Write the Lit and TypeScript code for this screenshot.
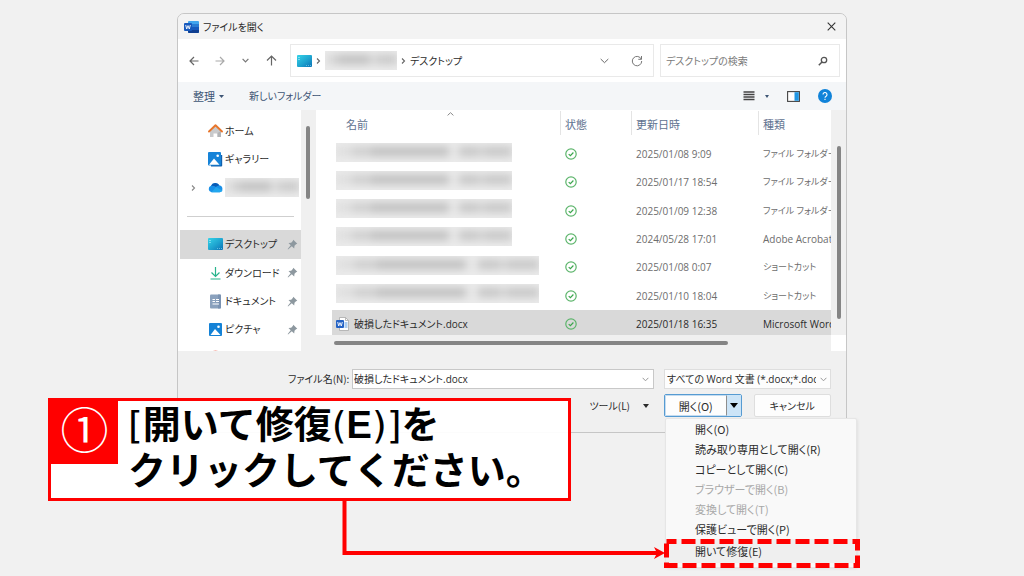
import { LitElement, html, css, svg, nothing } from "lit";
import { customElement } from "lit/decorators.js";
import { classMap } from "lit/directives/class-map.js";

interface FileRow {
  name?: string;
  wide?: boolean;
  date: string;
  kind: string;
  kana?: boolean;
  selected?: boolean;
}

const FILES: FileRow[] = [
  { date: "2025/01/08 9:09", kind: "ファイル フォルダー", kana: true },
  { date: "2025/01/17 18:54", kind: "ファイル フォルダー", kana: true },
  { date: "2025/01/09 12:38", kind: "ファイル フォルダー", kana: true },
  { date: "2024/05/28 17:01", kind: "Adobe Acrobat" },
  { date: "2025/01/08 0:07", kind: "ショートカット", kana: true, wide: true },
  { date: "2025/01/10 18:04", kind: "ショートカット", kana: true, wide: true },
  { name: "破損したドキュメント.docx", date: "2025/01/18 16:35", kind: "Microsoft Word", selected: true },
];

const MENU = [
  { label: "開く(O)" },
  { label: "読み取り専用として開く(R)" },
  { label: "コピーとして開く(C)" },
  { label: "ブラウザーで開く(B)", disabled: true },
  { label: "変換して開く(T)", disabled: true },
  { label: "保護ビューで開く(P)" },
  { label: "開いて修復(E)", marked: true },
];

const icon = (w: number, h: number, body: unknown) =>
  html`<svg width=${w} height=${h} viewBox="0 0 ${w} ${h}" fill="none" aria-hidden="true">${body}</svg>`;

const wordApp = icon(15, 14, svg`
  <rect x="4" y="1" width="11" height="12" rx="1" fill="#41a5ee"/>
  <path d="M4 4h11v3H4z" fill="#2b7cd3"/><path d="M4 7h11v3H4z" fill="#185abd"/>
  <path d="M4 10h11v2a1 1 0 0 1-1 1H5a1 1 0 0 1-1-1z" fill="#103f91"/>
  <rect x="0" y="3" width="8" height="8" rx="1" fill="#185abd"/>
  <path d="M1.700 5l1 4L4 5.600 5.300 9l1-4" stroke="#fff" stroke-width=".9"/>`);
const wordDoc = icon(13, 14, svg`
  <path d="M3.500 .5h6l3 3v10h-9z" fill="#fff" stroke="#a9a9a9" stroke-width=".8"/>
  <path d="M9.500 .5v3h3" stroke="#a9a9a9" stroke-width=".8"/>
  <path d="M8.500 6h3M8.500 8h3M8.500 10h3" stroke="#5b9be0" stroke-width="1"/>
  <rect x="0" y="3" width="8" height="8" rx="1" fill="#2462c4"/>
  <path d="M1.700 5l1 4L4 5.600 5.300 9l1-4" stroke="#fff" stroke-width=".9"/>`);
const desktop = icon(15, 12, svg`
  <defs><linearGradient id="dk" x1="0" y1="0" x2="1" y2="1"><stop stop-color="#35d3e8"/><stop offset=".55" stop-color="#1ea3cf"/><stop offset="1" stop-color="#0b72b5"/></linearGradient></defs>
  <rect x="0" y="0" width="15" height="12" rx="1" fill="url(#dk)"/>
  <path d="M1.500 2.500h1M1.500 4.500h1" stroke="#c9f7ff"/><path d="M9 10.500h1M11 10.500h1M13 10.500h1" stroke="#7fd0ee" stroke-width=".7"/>`);
const home = icon(15, 14, svg`
  <path d="M2 7l5.500-5L13 7v6H9.500V9.500h-4V13H2z" fill="#c9cacc"/>
  <path d="M9.500 9v4H13V7z" fill="#b2b4b7"/>
  <path d="M1 7.500l6.500-6.200L14 7.500" stroke="#e8762c" stroke-width="1.900" stroke-linecap="round" stroke-linejoin="round"/>`);
const gallery = icon(15, 15, svg`
  <path d="M13 3h1.200v10.500a1 1 0 0 1-1 1H3V13z" fill="#1261ad"/>
  <rect x="0" y="0" width="13" height="13.500" rx="1" fill="#1683d8"/>
  <path d="M1 12.700l5-6.200 5.500 6.200z" fill="#fff"/><circle cx="9.700" cy="3.700" r="1.300" fill="#fff"/>`);
const cloud = icon(15, 11, svg`
  <path d="M3.500 10.200A3.300 3.300 0 0 1 3 3.800 4.700 4.700 0 0 1 11.500 3.500a3.400 3.400 0 0 1 .2 6.700z" fill="#1990e8"/>
  <path d="M3 3.800A4.700 4.700 0 0 1 11.500 3.500c-1.700 0-2.500.6-3.500 1.400C6.500 4 5 3.500 3 3.800z" fill="#0a5bb5"/>
  <path d="M3.500 10.200L8 5l6.500 3.500c-.5 1.200-1.500 1.700-2.800 1.700z" fill="#23a7ee"/>`);
const download = icon(15, 14, svg`
  <path d="M7.500 1v9M3.500 6.500l4 4 4-4" stroke="#27b48c" stroke-width="1.200"/><path d="M2.500 13h10" stroke="#54c4a5" stroke-width="1.300"/>`);
const documents = icon(15, 15, svg`
  <rect x="2" y=".5" width="11" height="14" rx="1" fill="#8aa1bd"/><path d="M10 .5h2a1 1 0 0 1 1 1v12a1 1 0 0 1-1 1h-2z" fill="#7a92b1"/>
  <path d="M4.500 5.500h2.500M4.500 7.500h2.500M8 5.500h3M8 7.500h3M4.500 10h6.500" stroke="#fff" stroke-width="1.100"/>`);
const pictures = icon(15, 13, svg`
  <rect x="1" y="0" width="13" height="13" rx="1" fill="#1482d6"/>
  <path d="M2.500 12l4.500-6 5.500 6z" fill="#fff"/><circle cx="10.500" cy="3.700" r="1.300" fill="#fff"/>`);
const music = icon(15, 15, svg`<circle cx="7.500" cy="7.500" r="7" fill="#ee7b6c"/>`);
const pin = icon(11, 11, svg`
  <path d="M6.300 .8l4 4-1.300.5-1.500 1.500-.3 2.700L4.800 7.300 1 10.500.7 10l3-3.800L1.500 4l2.700-.3L5.800 2.100z" fill="#8d989f"/>`);
const synced = icon(12, 12, svg`
  <circle cx="6" cy="6" r="5.200" stroke="#5cb56b" stroke-width="1.200"/><path d="M3.700 6.100l1.700 1.600 3-3.200" stroke="#3da64e" stroke-width="1.200"/>`);
const chevronDown = icon(9, 6, svg`<path d="M.7 1l3.800 3.700L8.300 1" stroke="currentColor" stroke-width="1"/>`);
const chevronRight = icon(5, 8, svg`<path d="M1 1.500l2.500 2.500L1 6.500" stroke="currentColor" stroke-width="1.100"/>`);
const chevronUp = icon(7, 4, svg`<path d="M.6 3.400l2.900-2.700 2.900 2.700" stroke="#888" stroke-width="1"/>`);
const smallChevron = icon(7, 5, svg`<path d="M.6 .8l2.900 3 2.900-3" stroke="#999" stroke-width="1"/>`);
const caret = (w: number, h: number) => icon(w, h, svg`<path d="M0 0h${w}L${w / 2} ${h}z" fill="currentColor"/>`);

@customElement("app-root")
export class AppRoot extends LitElement {
  static styles = css`
    :host {
      display: block;
      position: relative;
      min-height: 100vh;
      overflow: hidden;
      box-sizing: border-box;
      padding: 13px 24px;
      background: #f1f1f1;
      color: #2b2b2b;
      font: 10px/16px "Noto Sans CJK JP", sans-serif;
      font-feature-settings: "palt";
    }
    * { box-sizing: border-box; }
    svg { display: block; flex: none; }
    button, input, select {
      font: inherit; font-feature-settings: inherit; color: inherit;
      margin: 0; padding: 0; border: 0; background: none; border-radius: 0; outline: 0;
    }
    button { display: flex; align-items: center; justify-content: center; white-space: nowrap; }
    .dialog {
      position: relative;
      max-width: 670px;
      margin: 0 auto;
      border: 1px solid #c6c6c6;
      border-radius: 7px;
      background: #f0f0f0;
    }
    .titlebar { display: flex; align-items: center; gap: 4px; height: 25px; padding: 0 10px 0 6px; background: #f3f3f3; border-radius: 6px 6px 0 0; }
    .titlebar h1 { flex: 1; margin: 0; font-size: 10px; font-weight: 400; }
    .nav { display: grid; grid-template-columns: 103px minmax(0, 364fr) minmax(0, 180fr); align-items: center; gap: 6px; padding: 5px 6px 5px 3px; background: #fff; }
    .arrows { display: grid; grid-template-columns: repeat(4, 1fr); }
    .address, .search { display: flex; align-items: center; height: 33px; border: 1px solid #e9e9e9; }
    .address { padding: 0 10px 0 6px; color: #666; gap: 4px; }
    .address .redacted { width: 72px; }
    .address .here { color: #2b2b2b; flex: 1; }
    .address button { width: 12px; margin-left: 17px; }
    .search { padding: 0 11px 0 5px; }
    .search input { flex: 1; min-width: 0; }
    .search input::placeholder { color: #7a7a7a; opacity: 1; }
    .toolbar { display: flex; align-items: center; height: 28px; padding: 0 14px 0 15px; background: #f4f6f8; color: #3d5575; }
    .toolbar .organize { gap: 4px; margin-right: 25px; font-size: 11px; }
    .toolbar .space { flex: 1; }
    .toolbar .view { gap: 10px; margin-right: 18px; }
    .toolbar .preview { margin-right: 18px; }
    .panes { display: grid; grid-template-columns: 123px 15px 1fr 15px; grid-template-rows: 225px 16px; }
    .side { grid-row: 1 / 3; background: #fff; overflow: hidden; padding: 7px 0 0 2px; }
    .places { display: grid; grid-template-columns: minmax(0, 1fr); grid-auto-rows: 1fr; height: 255px; margin: 0; padding: 0; list-style: none; }
    .place { display: grid; grid-template-columns: 26px 15px minmax(0, 1fr) 12px; align-items: center; column-gap: 2px; padding-right: 2px; white-space: nowrap; }
    .place.current { background: #d9d9d9; }
    .place .expand { justify-self: center; color: #888; }
    .place .redacted { grid-column: 3 / 5; }
    .rule { align-self: center; height: 1px; margin: 0 7px; background: #cfcfcf; }
    .sidebar-track { grid-row: 1 / 3; padding: 16px 6px 0 5px; }
    .thumb { border-radius: 2px; background: #858585; }
    .sidebar-track .thumb { height: 73px; }
    .list { background: #fff; overflow: hidden; padding: 1px 0 0 16px; position: relative; }
    .sort { position: absolute; left: 131px; top: 2px; }
    .files { width: 100%; height: 227px; table-layout: fixed; border-collapse: collapse; text-align: left; }
    .files th { height: 29px; padding: 0 0 4px 5px; font-size: 11px; font-weight: 400; color: #5f7290; background: linear-gradient(#e4e4e4, #e4e4e4) no-repeat 0 0 / 1px 24px; }
    .files th.name { padding-left: 14px; background: none; }
    .files td { height: 28px; padding: 0 0 0 5px; color: #6d6d6d; white-space: nowrap; overflow: hidden; }
    .files td.name { padding-left: 4px; }
    .files td.kana { font-size: 9px; }
    .latin { font-family: "Open Sans", "Noto Sans CJK JP", sans-serif; }
    .files tr.selected { background: #d9d9d9; }
    .files tr.selected td { color: #2b2b2b; }
    .file { display: flex; align-items: center; gap: 5px; }
    .col-status { width: 71px; }
    .col-date { width: 127px; }
    .col-kind { width: 73px; }
    .redacted { display: block; height: 19px; overflow: hidden; background: #ebebeb; }
    .redacted::before {
      content: ""; display: block; height: 9px; margin-top: 4px; filter: blur(4px);
      background: linear-gradient(90deg, #ddd 0 9%, #ccc 9% 20%, #bdbdbd 20% 64%, #e8e8e8 64% 70%, #c4c4c4 70% 81%, #d4d4d4 81% 84%, #c4c4c4 84%);
    }
    .name .redacted { width: 176px; margin-bottom: 4px; }
    .name .redacted.wide { width: 203px; }
    .list-track { padding: 36px 5px 0 6px; }
    .list-track .thumb { height: 173px; }
    .bottom-track { grid-column: 3; padding: 6px 103px 0 18px; }
    .bottom-track .thumb { height: 4px; }
    .corner { background: #fff; }
    .footer { display: grid; grid-template-columns: minmax(0, 1fr) 167px; gap: 5px 10px; padding: 18px 15px 15px 110px; }
    .field { display: flex; align-items: center; }
    .field label { flex: none; width: 64px; }
    .combo { flex: 1; display: flex; align-items: center; height: 20px; padding: 0 4px 0 1px; background: #fff; border: 1px solid #c8c8c8; }
    .combo input { flex: 1; min-width: 0; }
    .type { display: flex; align-items: center; height: 20px; padding-right: 3px; background: #fdfdfd; border: 1px solid #dedede; }
    .type select { appearance: none; flex: 1; min-width: 0; padding-left: 2px; margin-right: 4px; overflow: hidden; }
    .tools { justify-self: end; gap: 13px; margin-right: 5px; }
    .actions { display: grid; grid-template-columns: 1fr 1fr; gap: 12px; }
    .split { position: relative; display: flex; height: 23px; border: 1px solid #569bd2; border-radius: 2px; background: #fdfdfd; font-size: 11px; }
    .split .open { flex: 1; border: 1px solid; border-color: #c5dcf0 #8e8e8e #c5dcf0 #c5dcf0; }
    .split .more { width: 14px; background: #cce4f7; color: #000; }
    .cancel { height: 23px; background: #fdfdfd; border: 1px solid #dedede; border-radius: 2px; }
    .menu {
      position: absolute; z-index: 1; left: 0; top: 23px; width: 192px; margin: 0; padding: 0 0 4px;
      list-style: none; background: #f9f9f9; border: 1px solid #e6e6e6; border-radius: 2px; box-shadow: 1px 1px 3px #0001;
    }
    .menu button { width: 100%; height: 20px; padding-left: 29px; justify-content: flex-start; }
    .menu button:disabled { color: #a8a8a8; }
    .menu .marked { position: relative; background: #efefef; }
    .menu .marked button { height: 24px; }
    .outline { position: absolute; left: -2px; top: 0; }
    .callout {
      position: absolute; z-index: 2; left: 48px; top: 398px; width: 523px; height: 103px;
      display: flex; align-items: flex-start; gap: 10px;
      border: 3px solid #f00; background: #fffffff0; color: #000;
    }
    .step { width: 67px; height: 63px; background: #f00; color: #fff; font-size: 48px; line-height: 52px; text-align: center; }
    .message { margin: -2px 0 0; font-size: 38px; line-height: 46px; font-weight: 700; white-space: nowrap; font-feature-settings: normal; }
    .message .line { display: block; }
    .message .thin { font-family: "DejaVu Sans", sans-serif; font-weight: 400; line-height: 1; }
    .message .letter { font-family: "Liberation Sans", sans-serif; line-height: 1; }
    .pointer { position: absolute; z-index: 2; left: 340px; top: 500px; }
  `;

  private place(glyph: unknown, label: string, current = false, pinned = true) {
    return html`<li class=${classMap({ place: true, current })}>
      <span></span>${glyph}<span>${label}</span>${pinned ? pin : nothing}
    </li>`;
  }

  private row(f: FileRow) {
    return html`<tr class=${classMap({ selected: !!f.selected })}>
      <td class="name">
        ${f.name
          ? html`<span class="file latin">${wordDoc}${f.name}</span>`
          : html`<span class=${classMap({ redacted: true, wide: !!f.wide })}></span>`}
      </td>
      <td>${synced}</td>
      <td class="latin">${f.date}</td>
      <td class=${classMap({ latin: true, kana: !!f.kana })}>${f.kind}</td>
    </tr>`;
  }

  render() {
    return html`
      <section class="dialog">
        <header class="titlebar">
          ${wordApp}
          <h1>ファイルを開く</h1>
          <button aria-label="閉じる">${icon(9, 9, svg`<path d="M.7 .7l7.600 7.600M8.300 .7L.7 8.300" stroke="#333" stroke-width="1.100"/>`)}</button>
        </header>
        <nav class="nav">
          <div class="arrows">
            <button aria-label="戻る">${icon(10, 10, svg`<path d="M9.500 5H1M5 1L1 5l4 4" stroke="#666" stroke-width="1.200"/>`)}</button>
            <button aria-label="進む">${icon(10, 10, svg`<path d="M.5 5H9M5 1l4 4-4 4" stroke="#aaa" stroke-width="1.200"/>`)}</button>
            <button aria-label="履歴">${icon(7, 5, svg`<path d="M.6 .8l2.900 3 2.900-3" stroke="#777" stroke-width="1.200"/>`)}</button>
            <button aria-label="上へ">${icon(11, 11, svg`<path d="M5.500 10.500V1M1 5.500L5.500 1 10 5.500" stroke="#666" stroke-width="1.200"/>`)}</button>
          </div>
          <div class="address">
            ${desktop}${chevronRight}<span class="redacted"></span>${chevronRight}
            <span class="here">デスクトップ</span>
            <button aria-label="場所の一覧">${chevronDown}</button>
            <button aria-label="更新">${icon(12, 12, svg`<path d="M10.300 4.200A4.700 4.700 0 1 0 10.700 6M10.500 1v3.300H7.300" stroke="#777" stroke-width="1"/>`)}</button>
          </div>
          <div class="search">
            <input type="search" aria-label="検索" placeholder="デスクトップの検索" />
            ${icon(10, 10, svg`<circle cx="6" cy="4" r="2.700" stroke="#555" stroke-width="1.300"/><path d="M4 6L.8 9.200" stroke="#555" stroke-width="1.500"/>`)}
          </div>
        </nav>
        <div class="toolbar">
          <button class="organize">整理 ${caret(5, 3)}</button>
          <button>新しいフォルダー</button>
          <span class="space"></span>
          <button class="view" aria-label="表示">
            ${icon(12, 10, svg`<path d="M.5 1h11M.5 3.500h11M.5 6h11M.5 8.500h11" stroke="#444" stroke-width="1.300"/>`)}${caret(4, 3)}
          </button>
          <button class="preview" aria-label="プレビュー">
            ${icon(13, 11, svg`<rect x=".6" y=".6" width="11.800" height="9.800" fill="#fff" stroke="#444" stroke-width="1.100"/><path d="M7.500 1.200h4.300v8.600H7.500z" fill="#2196e3"/>`)}
          </button>
          <button aria-label="ヘルプ">
            ${icon(14, 14, svg`<circle cx="7" cy="7" r="7" fill="#1083d9"/><path d="M5 5.500a2 2 0 1 1 3.100 1.700C7.300 7.700 7 8 7 8.800M7 9.800v1.200" stroke="#fff" stroke-width="1.100"/>`)}
          </button>
        </div>
        <div class="panes">
          <div class="side">
            <ul class="places">
              ${this.place(home, "ホーム", false, false)}
              ${this.place(gallery, "ギャラリー", false, false)}
              <li class="place"><span class="expand">${chevronRight}</span>${cloud}<span class="redacted"></span></li>
              <li class="rule"></li>
              ${this.place(desktop, "デスクトップ", true)}
              ${this.place(download, "ダウンロード")}
              ${this.place(documents, "ドキュメント")}
              ${this.place(pictures, "ピクチャ")}
              <li class="place"><span></span>${music}</li>
            </ul>
          </div>
          <div class="sidebar-track"><div class="thumb"></div></div>
          <div class="list">
            <span class="sort">${chevronUp}</span>
            <table class="files">
              <colgroup><col /><col class="col-status" /><col class="col-date" /><col class="col-kind" /></colgroup>
              <thead>
                <tr><th class="name">名前</th><th>状態</th><th>更新日時</th><th>種類</th></tr>
              </thead>
              <tbody>${FILES.map((f) => this.row(f))}</tbody>
            </table>
          </div>
          <div class="list-track"><div class="thumb"></div></div>
          <div class="bottom-track"><div class="thumb"></div></div>
          <div class="corner"></div>
        </div>
        <footer class="footer">
          <div class="field">
            <label for="filename">ファイル名(N):</label>
            <div class="combo"><input id="filename" class="latin" type="text" .value=${"破損したドキュメント.docx"} />${smallChevron}</div>
          </div>
          <div class="type">
            <select class="latin" aria-label="ファイルの種類"><option>すべての Word 文書 (*.docx;*.docm)</option></select>
            ${smallChevron}
          </div>
          <button class="tools">ツール(L) ${caret(6, 4)}</button>
          <div class="actions">
            <div class="split">
              <button class="open">開く(O)</button>
              <button class="more" aria-label="開く方法">${caret(8, 5)}</button>
              <ul class="menu">
                ${MENU.map((m) => html`<li class=${classMap({ marked: !!m.marked })}>
                  <button ?disabled=${m.disabled}>${m.label}</button>
                  ${m.marked
                    ? html`<svg class="outline" width="196" height="29" fill="none" aria-hidden="true">
                        <rect x="2.500" y="2.500" width="191" height="24" stroke="#f00" stroke-width="5" stroke-dasharray="14 5" stroke-dashoffset="4" />
                      </svg>`
                    : nothing}
                </li>`)}
              </ul>
            </div>
            <button class="cancel">キャンセル</button>
          </div>
        </footer>
      </section>
      <aside class="callout">
        <span class="step">①</span>
        <p class="message">
          <span class="line"><span class="thin">[</span>開いて修復<span class="thin">(</span><span class="letter">E</span><span class="thin">)]</span>を</span>
          <span class="line">クリックしてください。</span>
        </p>
      </aside>
      <svg class="pointer" width="326" height="60" fill="none" aria-hidden="true">
        <path d="M4.500 0v53H320" stroke="#f00" stroke-width="4" />
        <path d="M314 47l11 6-11 6 3-6z" fill="#f00" />
      </svg>
    `;
  }
}
